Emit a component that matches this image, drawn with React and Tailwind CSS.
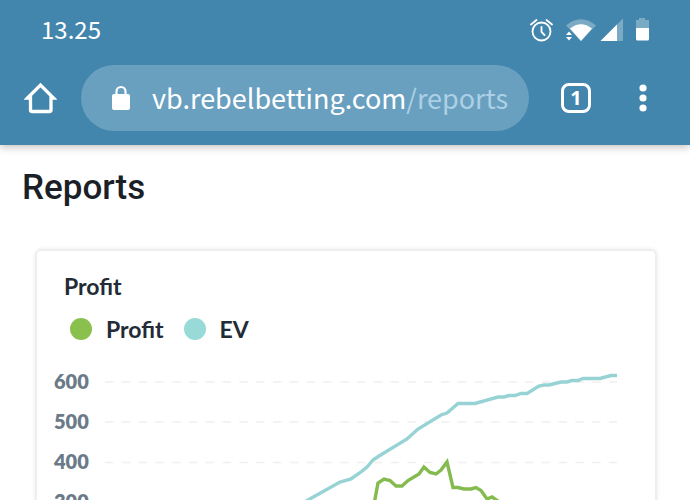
import React from "react";

const ticks = [600, 500, 400, 300];

const evPoints =
  "290,510 308,500 340,482 351,479 361,472 367,467 373,460 379,456 407,439 418,429 441,415 447,413 458,403.500 475,403.500 498,397 504,397 509,395.500 515,395.500 521,393.500 527,393.500 539,386 544,385 549,385 561,382 567,382 572,380.500 578,380.500 583,378.500 600,378.500 611,375.500 617,375.500";

const profitPoints =
  "373,510 378,483 384,479 390,480.500 396,486 402,486 408,480.500 419,474 424,467 430,472.500 436,474 441,470 447,462 453,487.500 458,487.500 464,489 471,489 476,487.500 481,490.500 487,499 492,497 498,501 504,506";

const StatusBar = () => (
  <div className="flex h-[65px] items-start justify-between pt-[15px] pr-10 pl-[41px]">
    <span className="text-[24px] leading-7">13.25</span>
    <svg width="120" height="28" viewBox="530 15 120 28" fill="none">
      {/* Alarm */}
      <g stroke="white" strokeWidth="1.8" strokeLinecap="round">
        <circle cx="541.5" cy="31.500" r="9" />
        <path d="M541.500 27v5l3 3M531 24.500l5.500-4.500M552 24.500l-5.500-4.500" />
      </g>
      {/* Wifi */}
      <path d="M566 25.500Q581 13 596 25.500L581 41Z" fill="white" fillOpacity=".3" />
      <path d="M570 28.500Q581 20 592 28.500L581 41Z" fill="white" />
      <path d="M566 35l3-3.500 3 3.500zM566 37l3 3.500 3-3.500z" fill="white" />
      {/* Signal */}
      <path d="M600.500 41L623 18.500V41Z" fill="white" fillOpacity=".3" />
      <path d="M600.500 41L617 24.500V41Z" fill="white" />
      {/* Battery */}
      <path d="M636 20h3v-2h6v2h4v8h-13z" fill="white" fillOpacity=".3" />
      <path d="M636 28h13v11q0 1.500-1.500 1.500h-10q-1.500 0-1.500-1.500z" fill="white" />
    </svg>
  </div>
);

const Toolbar = () => (
  <div className="flex items-center pr-[43px] pb-3.5 pl-6">
    <button type="button" aria-label="Home" className="mr-6">
      <svg width="33" height="34" viewBox="24 81 33 34" fill="none">
        <path
          d="M27.500 98L40.500 85L53.500 98H51V110Q51 111.500 49.500 111.500H32Q30.500 111.500 30.500 110V98Z"
          stroke="white"
          strokeWidth="3.3"
          strokeLinejoin="miter"
        />
      </svg>
    </button>
    <button
      type="button"
      className="flex h-[66px] min-w-0 flex-1 items-center rounded-full bg-[#69a0bf] pl-[31px] text-left"
    >
      <svg width="18" height="26" viewBox="0 0 18 26" className="mr-[22px] shrink-0">
        <path d="M4.500 10V6.500a4.500 4.500 0 0 1 9 0V10" fill="none" stroke="white" strokeWidth="2.2" />
        <rect y="9" width="18" height="16" rx="2" fill="white" />
      </svg>
      <span className="text-[27px] leading-9 whitespace-nowrap">
        vb.rebelbetting.com<span className="text-[#acd0e6]">/reports</span>
      </span>
    </button>
    <button
      type="button"
      aria-label="Tabs"
      className="ml-8 flex size-[30px] items-center justify-center rounded-lg border-3 border-white font-['Open_Sans',sans-serif] text-[20px] leading-5 font-bold"
    >
      1
    </button>
    <button type="button" aria-label="Menu" className="ml-12">
      <svg width="8" height="30" viewBox="0 0 8 30" fill="white">
        <circle cx="4" cy="5" r="3.6" />
        <circle cx="4" cy="15" r="3.6" />
        <circle cx="4" cy="25" r="3.6" />
      </svg>
    </button>
  </div>
);

const ProfitChart = () => (
  <div className="flex pt-4 pr-[38px] pl-[17px]">
    <div className="w-[51px] text-[20px] font-extrabold text-[#6b7a88]">
      {ticks.map((tick) => (
        <div key={tick} className="flex h-10 items-center">
          {tick}
        </div>
      ))}
    </div>
    <svg
      className="h-40 min-w-0 flex-1"
      viewBox="105 361 512 160"
      preserveAspectRatio="xMinYMin meet"
      fill="none"
    >
      <path
        d="M105 382H617M105 422H617M105 462.500H617M105 503H617"
        stroke="#f0f0f0"
        strokeWidth="1.6"
        strokeDasharray="8.4 8.4"
      />
      <polyline points={evPoints} stroke="#97d3d4" strokeWidth="3.4" />
      <polyline points={profitPoints} stroke="#84bb4f" strokeWidth="3.4" />
    </svg>
  </div>
);

const App = () => {
  return (
    <div className="h-screen overflow-hidden bg-white">
      <header className="bg-[#4386ad] font-['Noto_Sans_CJK_SC',sans-serif] text-white shadow-[0_2px_8px_rgba(0,0,0,0.25)]">
        <StatusBar />
        <Toolbar />
      </header>

      <main>
        <h1 className="pt-[23px] pl-[22px] font-['Roboto',sans-serif] text-[35px] leading-10 font-medium text-[#1b1f27]">
          Reports
        </h1>

        <section className="mt-[41px] mr-[33px] ml-[35px] rounded-md border-2 border-[#eeeeee] font-['Lato',sans-serif] text-[#222b36] shadow-[0_0_4px_rgba(0,0,0,0.08)]">
          <h2 className="pt-[19px] pl-[27px] text-[23px] leading-8 font-bold">Profit</h2>
          <ul className="flex items-center pt-[11px] pl-[33px] text-[23px] leading-8 font-bold">
            <li className="flex items-center">
              <span className="mr-3.5 size-[22px] rounded-full bg-[#8ac04e]" />
              Profit
            </li>
            <li className="ml-5 flex items-center">
              <span className="mr-3.5 size-[22px] rounded-full bg-[#97dad8]" />
              EV
            </li>
          </ul>
          <ProfitChart />
        </section>
      </main>
    </div>
  );
};

export default App;
